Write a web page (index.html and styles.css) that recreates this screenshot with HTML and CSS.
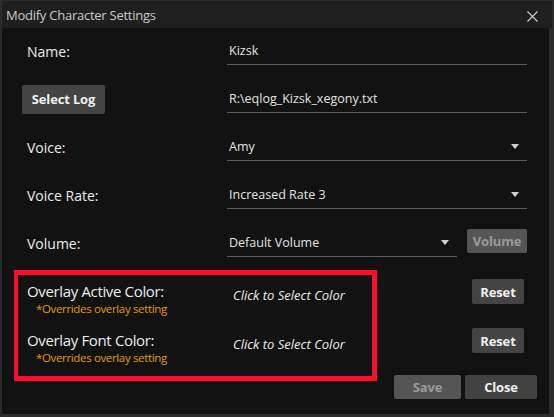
FILE: index.html
```html
<!DOCTYPE html>
<html>
<head>
<meta charset="utf-8">
<link rel="stylesheet" href="styles.css">
</head>
<body>
<div class="window">
  <div class="titlebar">
    <span class="title">Modify Character Settings</span>
    <svg class="close-x" width="11" height="11" viewBox="0 0 11 11"><path d="M0.5 0.5 L10.5 10.5 M10.5 0.5 L0.5 10.5" stroke="#cfcfcf" stroke-width="1.1" fill="none"/></svg>
  </div>
  <div class="content">
    <div class="rows">
      <div class="row">
        <div class="label">Name:</div>
        <div class="field"><span>Kizsk</span></div>
      </div>
      <div class="row">
        <div class="label-btn"><button class="btn">Select Log</button></div>
        <div class="field"><span>R:\eqlog_Kizsk_xegony.txt</span></div>
      </div>
      <div class="row">
        <div class="label">Voice:</div>
        <div class="field"><span>Amy</span><i class="arrow"></i></div>
      </div>
      <div class="row">
        <div class="label">Voice Rate:</div>
        <div class="field"><span>Increased Rate 3</span><i class="arrow"></i></div>
      </div>
      <div class="row">
        <div class="label">Volume:</div>
        <div class="field short"><span>Default Volume</span><i class="arrow"></i></div>
        <button class="btn disabled vol">Volume</button>
      </div>
    </div>
    <div class="lower">
      <div class="highlight">
        <div class="color-row">
          <div class="color-label">
            <div class="big">Overlay Active Color:</div>
            <div class="note">*Overrides overlay setting</div>
          </div>
          <div class="pick">Click to Select Color</div>
        </div>
        <div class="color-row second">
          <div class="color-label">
            <div class="big">Overlay Font Color:</div>
            <div class="note">*Overrides overlay setting</div>
          </div>
          <div class="pick">Click to Select Color</div>
        </div>
      </div>
      <div class="side">
        <button class="btn reset first">Reset</button>
        <button class="btn reset">Reset</button>
        <div class="footer">
          <button class="btn disabled save">Save</button>
          <button class="btn closebtn">Close</button>
        </div>
      </div>
    </div>
  </div>
</div>
</body>
</html>
```

FILE: styles.css
```css
html, body {
  margin: 0;
  padding: 0;
}
body {
  width: 554px;
  height: 417px;
  background: #2c2c2c;
  font-family: "Open Sans", "Noto Sans", sans-serif;
  color: #e6e6e6;
  overflow: hidden;
}
.window {
  box-sizing: border-box;
  width: 554px;
  height: 417px;
  padding: 1px 2px 3px 2px;
  display: flex;
  flex-direction: column;
}
.titlebar {
  height: 27px;
  background: #1f1f1f;
  display: flex;
  align-items: center;
  padding-left: 4px;
  padding-right: 14px;
  flex-shrink: 0;
}
.title {
  font-size: 13px;
  letter-spacing: -0.25px;
  color: #cacaca;
  flex: 1;
  padding-top: 1px;
}
.close-x {
  display: block;
  margin-top: 3px;
}
.content {
  flex: 1;
  background: #121212;
  display: flex;
  flex-direction: column;
  margin-right: 3px;
}
.rows {
  display: flex;
  flex-direction: column;
  gap: 16px;
  padding-top: 7px;
  padding-left: 25px;
}
.row {
  height: 32px;
  display: flex;
  align-items: center;
}
.label {
  width: 200px;
  font-size: 14px;
  color: #ececec;
}
.label-btn {
  width: 200px;
  margin-left: -5px;
  padding-right: 5px;
  box-sizing: content-box;
}
.field {
  box-sizing: border-box;
  width: 300px;
  height: 28px;
  border-bottom: 1px solid #5c5c5c;
  display: flex;
  align-items: center;
  padding-left: 2px;
  padding-right: 8px;
  font-size: 12.5px;
  color: #e2e2e2;
}
.field span {
  flex: 1;
}
.field.short {
  width: 230px;
}
.arrow {
  width: 0;
  height: 0;
  border-left: 4.5px solid transparent;
  border-right: 4.5px solid transparent;
  border-top: 5px solid #d0d0d0;
}
.btn {
  font-family: "Open Sans", "Noto Sans", sans-serif;
  background: #444444;
  color: #f0f0f0;
  border: none;
  border-radius: 2px;
  font-weight: bold;
  font-size: 13px;
  letter-spacing: -0.15px;
  padding: 0;
  display: flex;
  align-items: center;
  justify-content: center;
}
.label-btn .btn {
  width: 83px;
  height: 29px;
}
.btn.disabled {
  background: #555555;
  color: #9a9a9a;
}
.vol {
  width: 60px;
  height: 24px;
  margin-left: 10px;
  margin-top: -4px;
}
.lower {
  display: flex;
  margin-top: 11px;
  padding-left: 12px;
}
.highlight {
  box-sizing: border-box;
  width: 363px;
  height: 111px;
  border: 5px solid #ff0b2c;
  border-left-width: 4px;
  padding: 6px 0 0 9px;
}
.color-row {
  display: flex;
}
.color-row.second {
  margin-top: 13px;
}
.color-label {
  width: 206px;
}
.big {
  font-size: 15px;
  letter-spacing: -0.35px;
  line-height: 20px;
  color: #ececec;
}
.note {
  font-size: 11.5px;
  letter-spacing: -0.35px;
  line-height: 16px;
  color: #e09b00;
  padding-left: 9px;
}
.pick {
  font-size: 13px;
  font-style: italic;
  color: #ececec;
  padding-top: 4px;
  line-height: 20px;
}
.side {
  flex: 1;
  display: flex;
  flex-direction: column;
  align-items: flex-end;
}
.reset {
  width: 52px;
  height: 25px;
  margin-right: 25px;
}
.reset.first {
  margin-top: 9px;
}
.reset + .reset {
  margin-top: 24px;
}
.footer {
  display: flex;
  gap: 4px;
  margin-top: 22px;
  margin-right: 12px;
}
.save {
  width: 67px;
  height: 24px;
}
.closebtn {
  width: 72px;
  height: 24px;
  background: #434343;
}
```
